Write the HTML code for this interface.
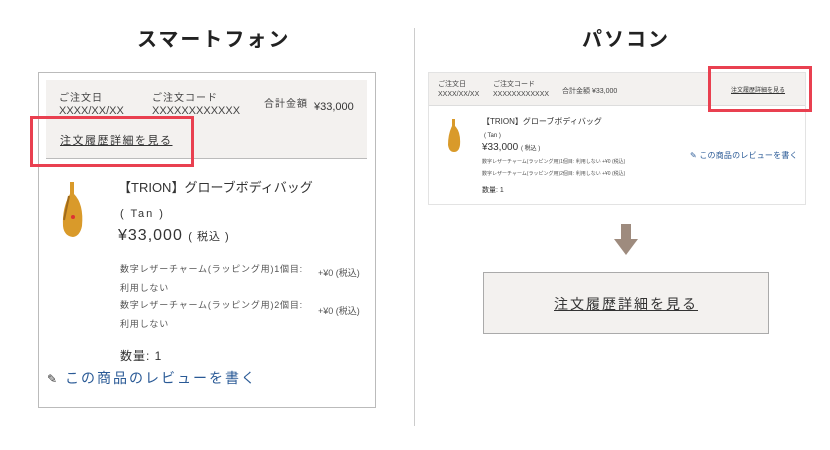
<!DOCTYPE html><html><head><meta charset="utf-8"><style>
body{margin:0;width:830px;height:450px;background:#fff;position:relative;overflow:hidden;font-family:"Liberation Sans","Noto Sans CJK JP",sans-serif;color:#333}
.a{position:absolute;white-space:nowrap}
.t{font-weight:bold;font-size:20px;color:#222;letter-spacing:2px}
</style></head><body>
<div class="a t" style="left:137px;top:23px">スマートフォン</div>
<div class="a t" style="left:582px;top:23px">パソコン</div>
<div class="a" style="left:414px;top:28px;width:1px;height:398px;background:#ccc"></div>

<!-- left -->
<div class="a" style="left:38px;top:72px;width:336px;height:334px;border:1px solid #bbb"></div>
<div class="a" style="left:46px;top:80px;width:321px;height:78px;background:#f3f1ef;border-bottom:1px solid #bbb"></div>
<div class="a" style="left:59px;top:89px;font-size:10px;letter-spacing:1px;color:#444">ご注文日</div>
<div class="a" style="left:59px;top:105px;font-size:11px;color:#444;height:10px;overflow:hidden">XXXX/XX/XX</div>
<div class="a" style="left:152px;top:89px;font-size:10px;letter-spacing:1px;color:#444">ご注文コード</div>
<div class="a" style="left:152px;top:105px;font-size:11px;color:#444;height:10px;overflow:hidden">XXXXXXXXXXXX</div>
<div class="a" style="left:264px;top:95px;font-size:10px;letter-spacing:1px;color:#444">合計金額</div>
<div class="a" style="left:314px;top:101px;font-size:11px;color:#333">¥33,000</div>
<div class="a" style="left:60px;top:132px;font-size:11px;letter-spacing:1.5px;color:#333;text-decoration:underline">注文履歴詳細を見る</div>
<div class="a" style="left:30px;top:116px;width:158px;height:45px;border:3px solid #e94050"></div>
<svg class="a" style="left:58px;top:180px" width="30" height="60"><path d="M12 2 L16 2 L16 14 Q26 24 24 46 Q22 56 15 57 Q6 56 5 46 Q4 28 12 14Z" fill="#d99a2a"/><path d="M11 16 L6 40" stroke="#a06a1a" stroke-width="2" fill="none"/><circle cx="15" cy="37" r="2" fill="#d33"/></svg>
<div class="a" style="left:118px;top:177px;font-size:13px;color:#333">【TRION】グローブボディバッグ</div>
<div class="a" style="left:120px;top:208px;font-size:11px;letter-spacing:2px">( Tan )</div>
<div class="a" style="left:118px;top:227px;font-size:16px;letter-spacing:1px">¥33,000 <span style="font-size:11px">( 税込 )</span></div>
<div class="a" style="left:120px;top:260px;font-size:9px;letter-spacing:0.8px;color:#555;line-height:19px">数字レザーチャーム(ラッピング用)1個目:<br>利用しない</div>
<div class="a" style="left:318px;top:266px;font-size:9px;color:#555">+¥0 (税込)</div>
<div class="a" style="left:120px;top:296px;font-size:9px;letter-spacing:0.8px;color:#555;line-height:19px">数字レザーチャーム(ラッピング用)2個目:<br>利用しない</div>
<div class="a" style="left:318px;top:304px;font-size:9px;color:#555">+¥0 (税込)</div>
<div class="a" style="left:120px;top:347px;font-size:12px;letter-spacing:1px">数量: 1</div>
<div class="a" style="left:47px;top:368px;font-size:14px;letter-spacing:2px;color:#2a5a96"><span style="color:#333;font-size:12px">✎</span> この商品のレビューを書く</div>

<!-- right -->
<div class="a" style="left:428px;top:72px;width:376px;height:131px;border:1px solid #e3e3e3"></div>
<div class="a" style="left:429px;top:73px;width:376px;height:32px;background:#f3f1ef;border-bottom:1px solid #ddd"></div>
<div class="a" style="left:438px;top:80px;font-size:7px;color:#444;line-height:10px">ご注文日<br>XXXX/XX/XX</div>
<div class="a" style="left:493px;top:80px;font-size:7px;color:#444;line-height:10px">ご注文コード<br>XXXXXXXXXXXX</div>
<div class="a" style="left:562px;top:86px;font-size:7px;color:#444">合計金額 ¥33,000</div>
<div class="a" style="left:731px;top:85px;font-size:6px;color:#333;text-decoration:underline">注文履歴詳細を見る</div>
<div class="a" style="left:708px;top:66px;width:98px;height:40px;border:3px solid #e94050"></div>
<svg class="a" style="left:446px;top:118px" width="16" height="36"><path d="M6 1 L9 1 L9 8 Q15 14 14 27 Q13 34 8 34 Q3 34 2 27 Q2 16 6 8Z" fill="#d99a2a"/></svg>
<div class="a" style="left:482px;top:116px;font-size:8px">【TRION】グローブボディバッグ</div>
<div class="a" style="left:484px;top:133px;font-size:6px">( Tan )</div>
<div class="a" style="left:482px;top:142px;font-size:10px">¥33,000 <span style="font-size:6px">( 税込 )</span></div>
<div class="a" style="left:482px;top:158px;font-size:5px;color:#555">数字レザーチャーム(ラッピング用)1個目: 利用しない +¥0 (税込)</div>
<div class="a" style="left:482px;top:170px;font-size:5px;color:#555">数字レザーチャーム(ラッピング用)2個目: 利用しない +¥0 (税込)</div>
<div class="a" style="left:482px;top:185px;font-size:7px">数量: 1</div>
<div class="a" style="left:690px;top:150px;font-size:8px;color:#2a5a96;letter-spacing:0.2px">✎ この商品のレビューを書く</div>
<svg class="a" style="left:614px;top:224px" width="24" height="32"><rect x="7" y="0" width="10" height="16" fill="#9e8b7e"/><path d="M0 15 L24 15 L12 31Z" fill="#9e8b7e"/></svg>
<div class="a" style="left:483px;top:272px;width:284px;height:60px;background:#f3f1ef;border:1px solid #aaa"></div>
<div class="a" style="left:483px;top:294px;width:286px;text-align:center;font-size:14px;letter-spacing:2px;text-decoration:underline;color:#333">注文履歴詳細を見る</div>
</body></html>
